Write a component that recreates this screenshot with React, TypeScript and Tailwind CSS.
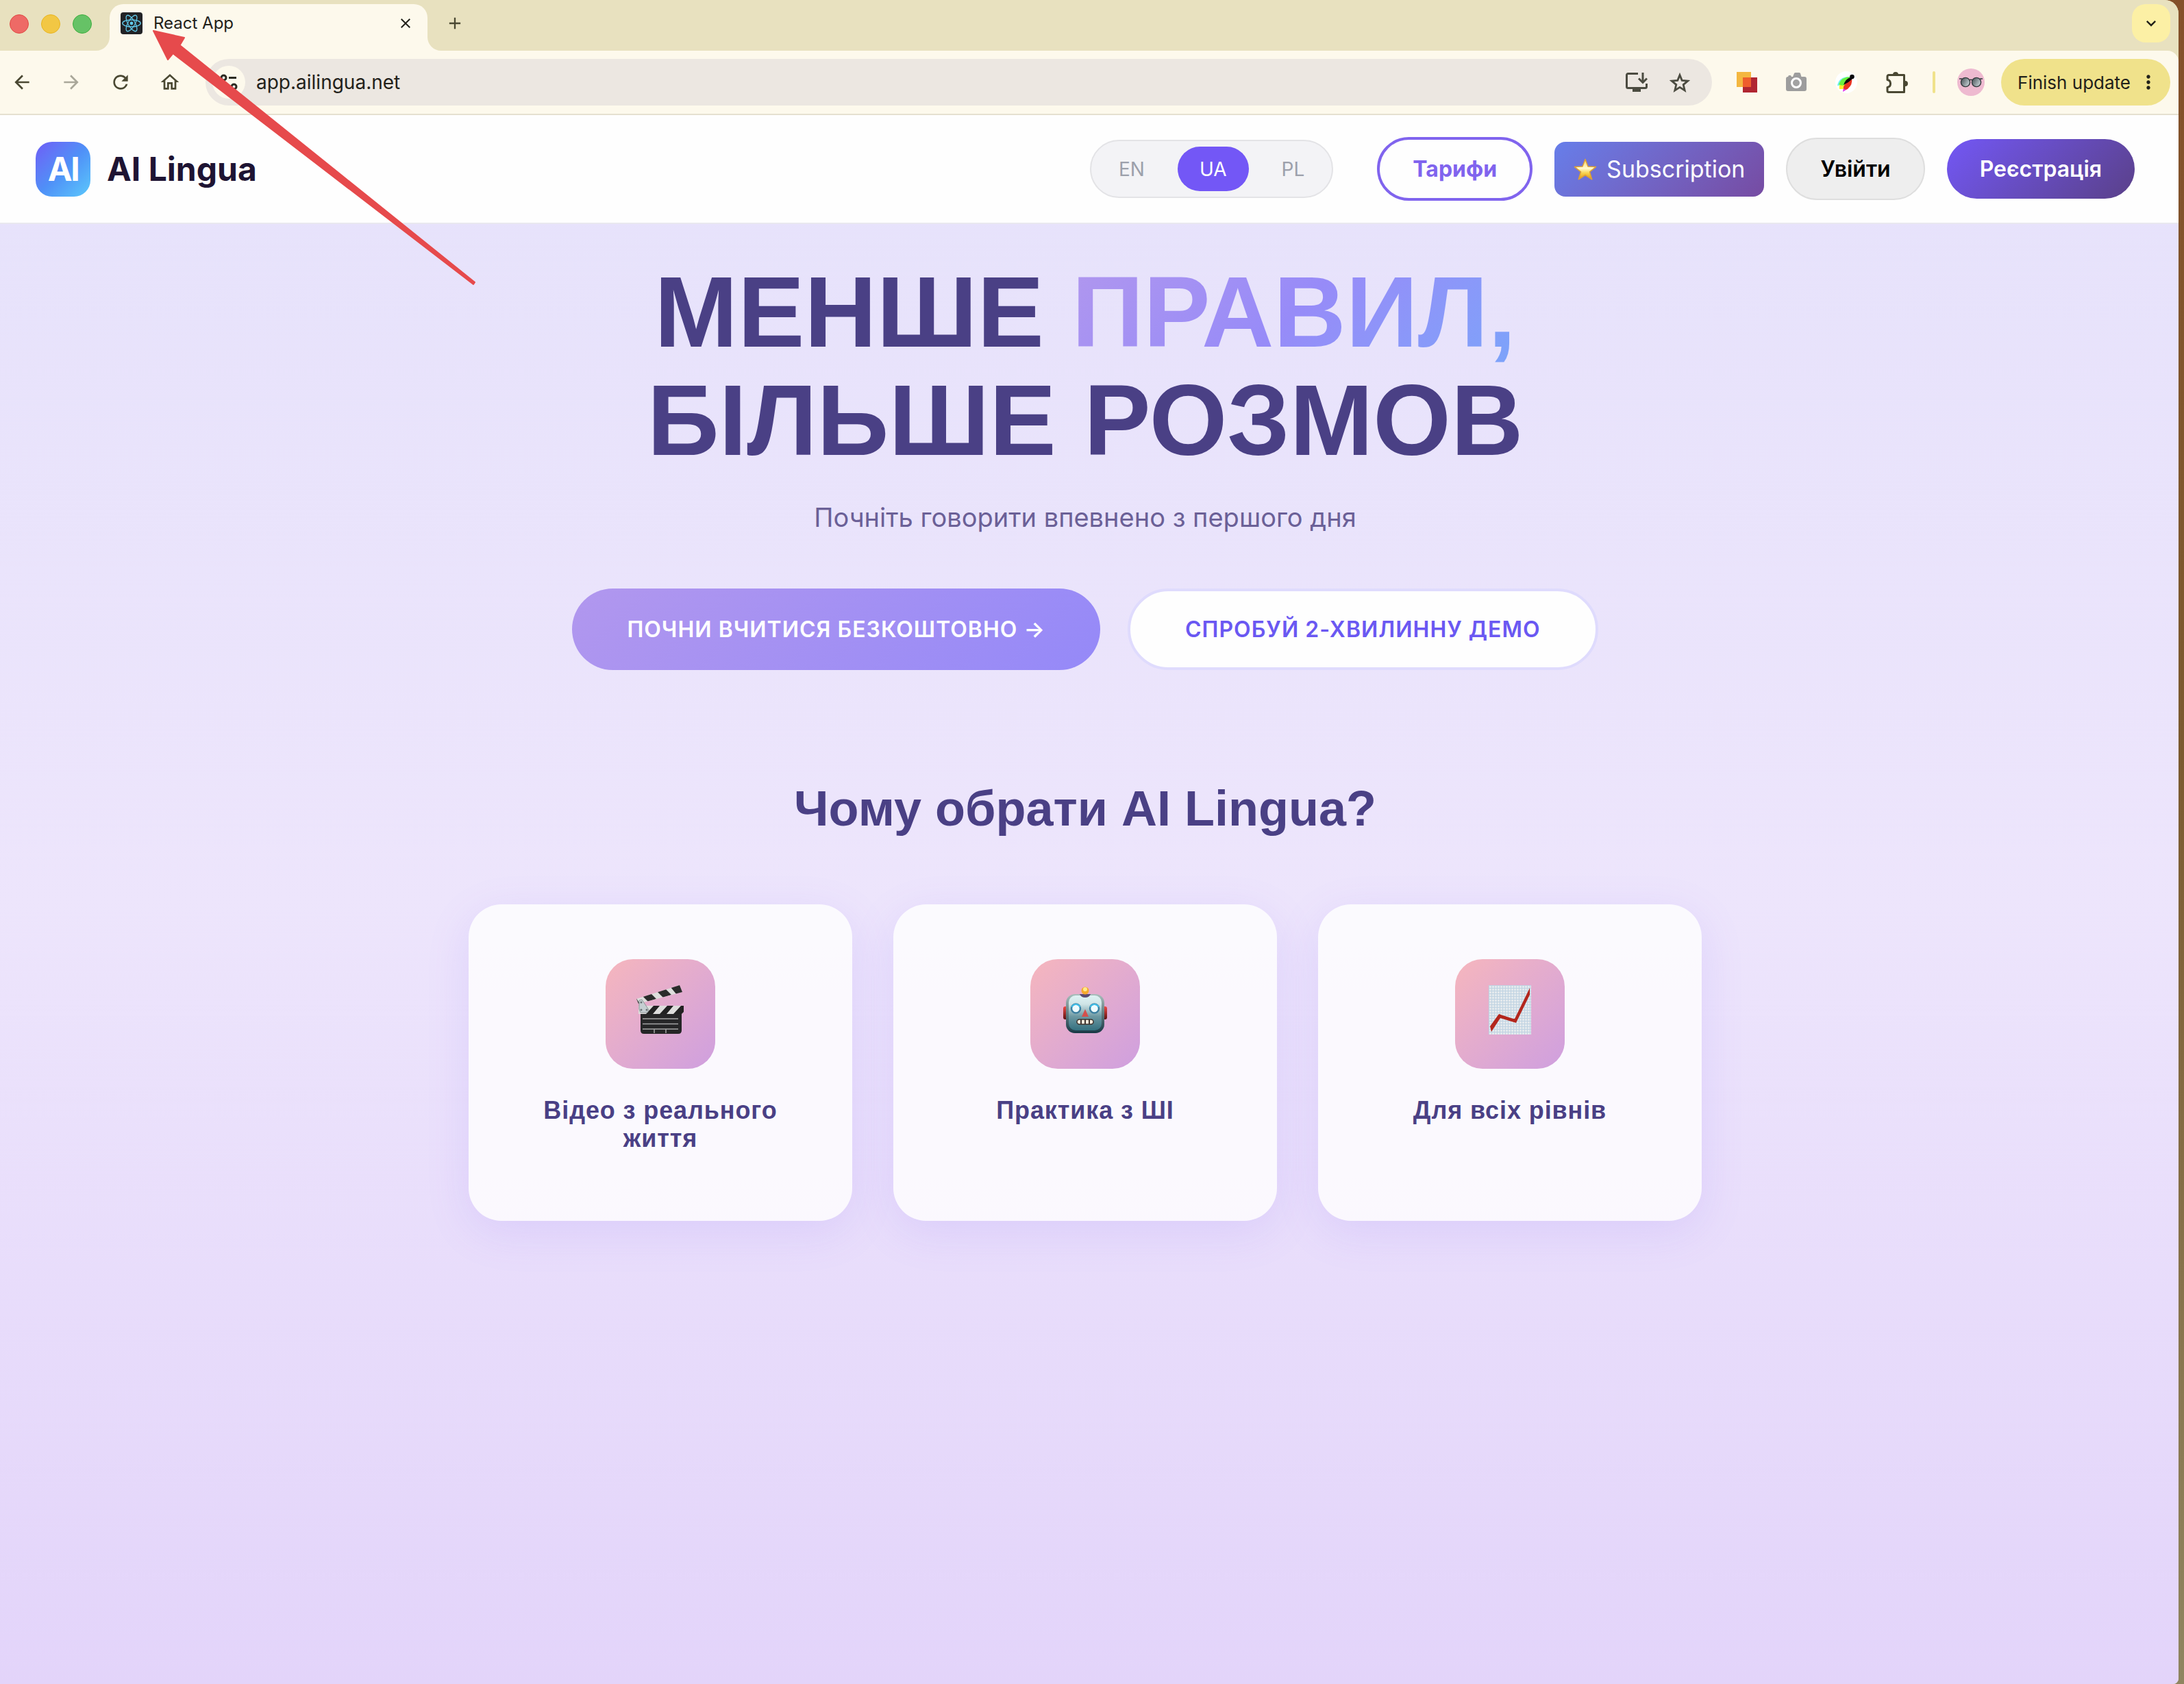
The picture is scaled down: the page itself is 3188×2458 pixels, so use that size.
import { useState } from 'react'
import type { ReactNode } from 'react'
import {
  MdArrowBack,
  MdArrowForward,
  MdRefresh,
  MdOutlineHome,
  MdClose,
  MdAdd,
  MdMoreVert,
  MdKeyboardArrowDown,
} from 'react-icons/md'

const languages = ['EN', 'UA', 'PL']

function ReactFavicon() {
  return (
    <svg viewBox="0 0 32 32" className="w-8 h-8 shrink-0">
      <rect width="32" height="32" rx="4" fill="#222326" />
      <g fill="none" stroke="#61c9ea" strokeWidth="1.3">
        <ellipse cx="16" cy="16" rx="13.2" ry="5" />
        <ellipse cx="16" cy="16" rx="13.2" ry="5" transform="rotate(60 16 16)" />
        <ellipse cx="16" cy="16" rx="13.2" ry="5" transform="rotate(120 16 16)" />
      </g>
      <circle cx="16" cy="16" r="2.4" fill="#61c9ea" />
    </svg>
  )
}

function SiteInfoIcon() {
  return (
    <svg viewBox="0 0 26 26" className="w-[26px] h-[26px]" fill="none" stroke="#2b2a22" strokeWidth="3">
      <circle cx="5.5" cy="6.5" r="3.5" />
      <path d="M13 6.5h11M2 19.5h11" />
      <circle cx="20.5" cy="19.5" r="3.5" />
    </svg>
  )
}

function InstallIcon() {
  return (
    <svg viewBox="0 0 32 28" className="w-8 h-7" fill="none" stroke="#4b4b40" strokeWidth="3">
      <path d="M18 1.5H3.5a2 2 0 0 0-2 2v17a2 2 0 0 0 2 2h25a2 2 0 0 0 2-2V16" />
      <path d="M10 22h12v6H10z" fill="#4b4b40" stroke="none" />
      <path d="M25 0v14" />
      <path d="M19 8.5l6 6 6-6" />
    </svg>
  )
}

function StarIcon() {
  return (
    <svg viewBox="0 0 30 29" className="w-[30px] h-[29px]" fill="none" stroke="#4b4b40" strokeWidth="2.8">
      <path d="M15 3.5l3.2 7.9 8.5.7-6.5 5.5 2 8.3-7.2-4.5-7.2 4.5 2-8.3-6.500-5.500 8.5-.7z" />
    </svg>
  )
}

function SquaresIcon() {
  return (
    <svg viewBox="0 0 30 30" className="w-[30px] h-[30px]">
      <rect width="21" height="22" fill="#f4b740" />
      <rect x="9" y="8" width="21" height="22" fill="#b02631" />
      <rect x="9" y="8" width="12" height="14" fill="#ee5e2d" />
    </svg>
  )
}

function CameraIcon() {
  return (
    <svg viewBox="0 0 30 28" className="w-[30px] h-7">
      <path d="M3 6l1-2h3l1 2h2l2-5q.5-1 2-1h5q1.5 0 2 1l1.5 5H27q3 0 3 3v15q0 3-3 3H3q-3 0-3-3V9q0-3 3-3z" fill="#9d9d9d" />
      <circle cx="15" cy="15" r="6.5" fill="#a2a2a2" stroke="#fff" strokeWidth="3" />
    </svg>
  )
}

function FeatherIcon() {
  return (
    <svg viewBox="0 0 32 32" className="w-8 h-8">
      <circle cx="16" cy="16" r="16" fill="#fff" />
      <path d="M3 21Q5 8 21 8L13 20z" fill="#6df5f0" />
      <path d="M6 26q-1-6 2-8l10 2-5 6z" fill="#fbf02c" />
      <path d="M11 30l1-7 10-4q-4 8-11 11z" fill="#e23be8" />
      <path d="M5 19Q9 8 22 8L13 20q-4 2-8-1z" fill="#6bf23c" />
      <path d="M12 25q-1-6 12-15 2 9-6 16-3 2-6-1z" fill="#ea3323" />
      <path d="M12 20q3-9 10-11l3 2q-6 6-13 9z" fill="#0a0a0a" />
      <circle cx="24.5" cy="8" r="3.3" fill="#0a0a0a" />
    </svg>
  )
}

function PuzzleIcon() {
  return (
    <svg viewBox="0 0 32 32" className="w-8 h-8">
      <path
        d="M4 5.5h22.5v25H4a2 2 0 0 1-2-2v-5a5.600 5.600 0 0 0 0-11v-5a2 2 0 0 1 2-2z"
        fill="none"
        stroke="#4a4832"
        strokeWidth="3"
        strokeLinejoin="round"
      />
      <path d="M10 5a4 4 0 0 1 8 0zM28 14a4 4 0 0 1 0 8z" fill="#4a4832" />
    </svg>
  )
}

function Avatar() {
  return (
    <svg viewBox="0 0 40 40" className="w-10 h-10">
      <defs>
        <linearGradient id="lens" x1="0" y1="0" x2="1" y2="0.6">
          <stop offset="0" stopColor="#3f4a4e" />
          <stop offset="1" stopColor="#c3ced2" />
        </linearGradient>
      </defs>
      <circle cx="20" cy="20" r="20" fill="#eebad0" />
      <g fill="url(#lens)" stroke="#33393c" strokeWidth="1.4">
        <circle cx="12" cy="20" r="6.6" />
        <circle cx="28" cy="20" r="6.6" />
      </g>
      <path d="M3 15h4M33 15h4M18 17q2-1.5 4 0" stroke="#33393c" strokeWidth="1.6" fill="none" />
    </svg>
  )
}

function GoldStar() {
  return (
    <svg viewBox="0 0 34 32" className="w-[34px] h-8">
      <defs>
        <linearGradient id="gold" x1="0" y1="0" x2="0" y2="1">
          <stop offset="0" stopColor="#f9d25a" />
          <stop offset="0.45" stopColor="#fffbd0" />
          <stop offset="0.7" stopColor="#f6d048" />
          <stop offset="1" stopColor="#dc8f1f" />
        </linearGradient>
      </defs>
      <path
        d="M17 1.5l4 10.5 11.5.6-9 7.2 3.2 11L17 24.5l-9.7 6.3 3.2-11-9-7.2L13 12z"
        fill="url(#gold)"
        stroke="#dda135"
        strokeWidth="1.5"
        strokeLinejoin="round"
      />
    </svg>
  )
}

function ClapperIcon() {
  return (
    <svg viewBox="0 0 72 72" className="w-[72px] h-[72px]">
      <defs>
        <clipPath id="topBar">
          <path d="M1 20L64 0l4 10L4 27z" />
        </clipPath>
        <clipPath id="lowBar">
          <path d="M4 30h66v9l-3 3H4z" />
        </clipPath>
      </defs>
      <path d="M7 40h60v26q0 5-5 5H12q-5 0-5-5z" fill="#262627" />
      <g clipPath="url(#topBar)">
        <path d="M0 0h72v30H0z" fill="#dededc" />
        <path d="M0 18l6 9H2zM10 16l12-4 8 8-12 4zM31 9l12-4 9 9-12 4zM51 3l14-5 6 12-11 4z" fill="#2b2b2b" />
      </g>
      <g clipPath="url(#lowBar)">
        <path d="M4 30h66v12H4z" fill="#dededc" />
        <path d="M26 30h9L25 42H15zM46 30h9L45 42H35zM66 30h6v12H55z" fill="#222" />
      </g>
      <path d="M5 22l4-1 10 15-2 4H7l-2-5z" fill="#c5ced1" stroke="#8d9698" strokeWidth="1" />
      <g fill="#6b7375">
        <circle cx="8" cy="25" r="1.5" />
        <circle cx="8" cy="36" r="1.5" />
        <circle cx="16" cy="36" r="1.5" />
      </g>
      <path d="M10 49h52M10 56.5h52M10 64h52M27 64v6M44 64v6" stroke="#a5a5a5" strokeWidth="1.5" />
    </svg>
  )
}

function RobotIcon() {
  return (
    <svg viewBox="0 0 64 68" className="w-16 h-[68px]">
      <defs>
        <linearGradient id="face" x1="0" y1="0" x2="0" y2="1">
          <stop offset="0" stopColor="#dff3f4" />
          <stop offset="0.25" stopColor="#cfe4e6" />
          <stop offset="0.6" stopColor="#6c98a2" />
          <stop offset="1" stopColor="#34707f" />
        </linearGradient>
        <linearGradient id="ear" x1="0" y1="0" x2="0" y2="1">
          <stop offset="0" stopColor="#ef4a45" />
          <stop offset="1" stopColor="#5d1212" />
        </linearGradient>
        <linearGradient id="frame" x1="0" y1="0" x2="0" y2="1">
          <stop offset="0" stopColor="#a9bfbc" />
          <stop offset="1" stopColor="#183845" />
        </linearGradient>
      </defs>
      <rect y="29" width="7" height="19" rx="3" fill="url(#ear)" />
      <rect x="57" y="29" width="7" height="19" rx="3" fill="url(#ear)" />
      <rect x="4" y="11" width="56" height="57" rx="13" fill="url(#frame)" />
      <rect x="8" y="13" width="48" height="51" rx="10" fill="url(#face)" />
      <path d="M24 11h16q-2 5-8 5t-8-5z" fill="#5b4a72" />
      <circle cx="32" cy="6" r="5.5" fill="#f6a92b" />
      <circle cx="32" cy="4" r="3" fill="#fde98a" />
      <g fill="#eefcff" stroke="#3d7fa0" strokeWidth="2.5">
        <circle cx="18.5" cy="32" r="6.5" />
        <circle cx="45.5" cy="32" r="6.5" />
      </g>
      <path d="M12.5 30a6.5 6.5 0 0 1 12 0M39.5 30a6.5 6.5 0 0 1 12 0" fill="none" stroke="#41c0ea" strokeWidth="2" />
      <path d="M32 33l5 11H27z" fill="#d4504c" />
      <rect x="20" y="48" width="24" height="7" rx="3.5" fill="#f3ecdd" stroke="#3e342f" strokeWidth="1.5" />
      <path d="M26 48v7M32 48v7M38 48v7" stroke="#3e342f" strokeWidth="2" />
    </svg>
  )
}

function ChartIcon() {
  return (
    <svg viewBox="0 0 62 72" className="w-[62px] h-[72px]">
      <defs>
        <pattern id="grid" width="4" height="4" patternUnits="userSpaceOnUse">
          <rect width="4" height="4" fill="#e3e9ed" />
          <path d="M0 .5h4M.5 0v4" stroke="#c0d3e2" strokeWidth="1" />
        </pattern>
      </defs>
      <rect width="62" height="72" fill="url(#grid)" />
      <path d="M2 60l13-18q22 8 23 7L60 4v10L40 55 17 48 4 68z" fill="#b3261d" />
    </svg>
  )
}

const features: { title: string; icon: ReactNode }[] = [
  { title: 'Відео з реального життя', icon: <ClapperIcon /> },
  { title: 'Практика з ШІ', icon: <RobotIcon /> },
  { title: 'Для всіх рівнів', icon: <ChartIcon /> },
]

function TabStrip() {
  return (
    <div className="flex items-end justify-between bg-[#e8e1bf] h-[74px] pr-3">
      <div className="flex items-end h-full">
        <div className="flex items-center gap-[18px] h-full pb-1 pl-[14px] pr-[26px]">
          <button aria-label="Close window" className="w-7 h-7 rounded-full bg-[#ee6a66] border border-[#e04a44]" />
          <button aria-label="Minimize window" className="w-7 h-7 rounded-full bg-[#f2c744] border border-[#e8b420]" />
          <button aria-label="Zoom window" className="w-7 h-7 rounded-full bg-[#66c266] border border-[#3fae3f]" />
        </div>
        <div className="relative flex items-center w-[464px] h-[68px] rounded-t-[20px] bg-[#fdf9ec] pl-4 pr-5 pb-3 gap-4">
          <svg viewBox="0 0 20 20" className="absolute -left-5 bottom-0 w-5 h-5">
            <path d="M20 0v20H0A20 20 0 0 0 20 0z" fill="#fdf9ec" />
          </svg>
          <svg viewBox="0 0 20 20" className="absolute -right-5 bottom-0 w-5 h-5">
            <path d="M0 0v20h20A20 20 0 0 1 0 0z" fill="#fdf9ec" />
          </svg>
          <ReactFavicon />
          <span className="flex-1 text-2xl text-[#22211a]">React App</span>
          <button aria-label="Close tab">
            <MdClose className="w-6 h-6 text-[#22211a]" stroke="currentColor" />
          </button>
        </div>
        <button aria-label="New tab" className="flex items-center h-[68px] pb-3 pl-[26px]">
          <MdAdd className="w-7 h-7 text-[#4a4832]" />
        </button>
      </div>
      <button
        aria-label="Search tabs"
        className="self-start mt-[6px] flex items-center justify-center w-14 h-14 rounded-[20px] bg-[#fcf0a5]"
      >
        <MdKeyboardArrowDown className="w-7 h-7 text-[#22211a]" stroke="currentColor" />
      </button>
    </div>
  )
}

function Toolbar() {
  return (
    <div className="flex items-center bg-[#fdf9ec] border-b-2 border-[#e5e0d0] py-3 pl-4 pr-3 rounded-tr-[16px]">
      <div className="flex items-center gap-10 pr-9 text-[#4a4832]">
        <button aria-label="Back"><MdArrowBack className="w-8 h-8" /></button>
        <button aria-label="Forward"><MdArrowForward className="w-8 h-8 text-[#a9a799]" /></button>
        <button aria-label="Reload"><MdRefresh className="w-8 h-8" /></button>
        <button aria-label="Home"><MdOutlineHome className="w-8 h-8" /></button>
      </div>
      <div className="flex-1 flex items-center h-[68px] rounded-full bg-[#ece7e1] pl-[10px] pr-8">
        <button
          aria-label="Site information"
          className="flex items-center justify-center w-12 h-12 rounded-full bg-[#fdf9ec]"
        >
          <SiteInfoIcon />
        </button>
        <input
          aria-label="Address"
          defaultValue="app.ailingua.net"
          className="flex-1 ml-4 text-[28px] text-[#22211a] bg-transparent outline-none"
        />
        <div className="flex items-center gap-8">
          <button aria-label="Install app"><InstallIcon /></button>
          <button aria-label="Bookmark this page"><StarIcon /></button>
        </div>
      </div>
      <div className="flex items-center gap-[42px] pl-9">
        <button aria-label="Screen capture"><SquaresIcon /></button>
        <button aria-label="Camera"><CameraIcon /></button>
        <button aria-label="Color picker"><FeatherIcon /></button>
        <button aria-label="Extensions"><PuzzleIcon /></button>
      </div>
      <div className="flex items-center gap-8 pl-9 pr-6">
        <span className="w-1 h-8 rounded-full bg-[#f0e28b]" />
        <button aria-label="Profile"><Avatar /></button>
      </div>
      <button className="flex items-center gap-[10px] h-[68px] rounded-full bg-[#f0e28b] pl-6 pr-4 text-[26px] text-[#22211a]">
        Finish update
        <MdMoreVert className="w-8 h-10" />
      </button>
    </div>
  )
}

function SiteHeader() {
  const [language, setLanguage] = useState('UA')

  return (
    <header className="flex items-center justify-between bg-[#fefefe] border-b-2 border-[#e9e8ef] h-[159px] pl-[52px] pr-16">
      <a href="#" className="flex items-center gap-6">
        <span className="flex items-center justify-center w-20 h-20 rounded-3xl bg-linear-135 from-[#6c5cf6] via-[#4f8ff7] to-[#5cc8fb] text-5xl font-bold tracking-tighter text-white">
          AI
        </span>
        <span className="text-5xl font-bold text-[#1e1433]">AI Lingua</span>
      </a>
      <nav className="flex items-center gap-8">
        <div className="flex gap-4 mr-8 p-2 rounded-full border-2 border-[#e3e3e6] bg-[#f3f3f6]">
          {languages.map((code) => (
            <button
              key={code}
              onClick={() => setLanguage(code)}
              className={`
                h-[65px] px-8 rounded-full text-[28px]
                ${code === language ? 'bg-[#7357f6] text-white' : 'text-[#9ca0ab]'}
              `}
            >
              {code}
            </button>
          ))}
        </div>
        <button className="h-[93px] px-12 rounded-full border-4 border-[#8064ee] text-[32px] font-bold text-[#8064ee]">
          Тарифи
        </button>
        <button className="flex items-center gap-[14px] h-20 px-7 rounded-2xl bg-linear-135 from-[#667eea] to-[#764ba2] text-[34px] text-white">
          <GoldStar />
          Subscription
        </button>
        <button className="h-[91px] px-12 rounded-full border-2 border-[#dedede] bg-[#eeeeee] text-[32px] font-semibold text-black">
          Увійти
        </button>
        <button className="h-[87px] px-12 rounded-full bg-linear-135 from-[#7357f6] to-[#5a4089] text-[32px] font-semibold text-white">
          Реєстрація
        </button>
      </nav>
    </header>
  )
}

function Hero() {
  return (
    <section className="flex flex-col items-center text-center">
      <h1 className="font-['Liberation_Sans',sans-serif] text-[146px] leading-[158px] font-bold text-[#4a4085]">
        МЕНШЕ{' '}
        <span className="bg-linear-135 from-[#b197ee] via-[#978bf8] to-[#7ba4fa] bg-clip-text text-transparent">
          ПРАВИЛ,
        </span>
        <br />
        БІЛЬШЕ РОЗМОВ
      </h1>
      <p className="mt-8 text-[38px] leading-[60px] text-[#6b6097]">
        Почніть говорити впевнено з першого дня
      </p>
      <div className="flex gap-10 mt-[74px] text-[32px] font-semibold tracking-[1px]">
        <button className="h-[119px] px-20 rounded-full bg-linear-135 from-[#b197ee] to-[#9589f8] text-white">
          ПОЧНИ ВЧИТИСЯ БЕЗКОШТОВНО →
        </button>
        <button className="h-[119px] px-20 rounded-full border-4 border-[#dfdbfd] bg-[#fefefe] text-[#6a58f2]">
          СПРОБУЙ 2-ХВИЛИННУ ДЕМО
        </button>
      </div>
    </section>
  )
}

function Features() {
  return (
    <section className="flex flex-col items-center mt-40 font-['Liberation_Sans',sans-serif] text-[#4a4085]">
      <h2 className="text-[72px] leading-[84px] font-bold">Чому обрати AI Lingua?</h2>
      <div className="grid grid-cols-3 gap-[60px] w-full max-w-[1800px] mt-[98px]">
        {features.map((feature) => (
          <article
            key={feature.title}
            className="flex flex-col items-center min-h-[462px] p-20 rounded-[48px] bg-white/80 shadow-[0_16px_64px_rgba(124,92,246,0.13)]"
          >
            <div className="flex items-center justify-center w-40 h-40 pb-3 rounded-[40px] bg-linear-135 from-[#f6b6bd] to-[#cf9fdf]">
              {feature.icon}
            </div>
            <h3 className="mt-10 text-4xl leading-[41px] font-bold tracking-wide text-center">{feature.title}</h3>
          </article>
        ))}
      </div>
    </section>
  )
}

// Red pointer drawn over the window, from the hero to the tab favicon
function PointerArrow() {
  return (
    <svg viewBox="0 0 720 440" className="absolute left-0 top-0 w-[720px] h-[440px] pointer-events-none">
      <path
        d="M224 45L269 55l-6.5 11L693 412l-2 3L252.5 78 245 87z"
        fill="#e64a4c"
        stroke="#e64a4c"
        strokeWidth="2"
        strokeLinejoin="round"
      />
    </svg>
  )
}

export default function App() {
  return (
    <div className="relative min-h-screen flex pr-2 font-[Inter,sans-serif] bg-linear-to-b from-[#84502a] via-[#7b5a30] via-45% to-[#8f8560]">
      <div className="flex-1 flex flex-col overflow-hidden rounded-tr-[20px] rounded-br-lg bg-[#e8e1bf]">
        <TabStrip />
        <Toolbar />
        <div className="flex-1 flex flex-col bg-linear-to-b from-[#e6e2fb] via-[#ede5fc] to-[#e3d4fa]">
          <SiteHeader />
          <main className="flex-1 pt-[50px] pb-20 pr-3">
            <Hero />
            <Features />
          </main>
        </div>
      </div>
      <PointerArrow />
    </div>
  )
}
